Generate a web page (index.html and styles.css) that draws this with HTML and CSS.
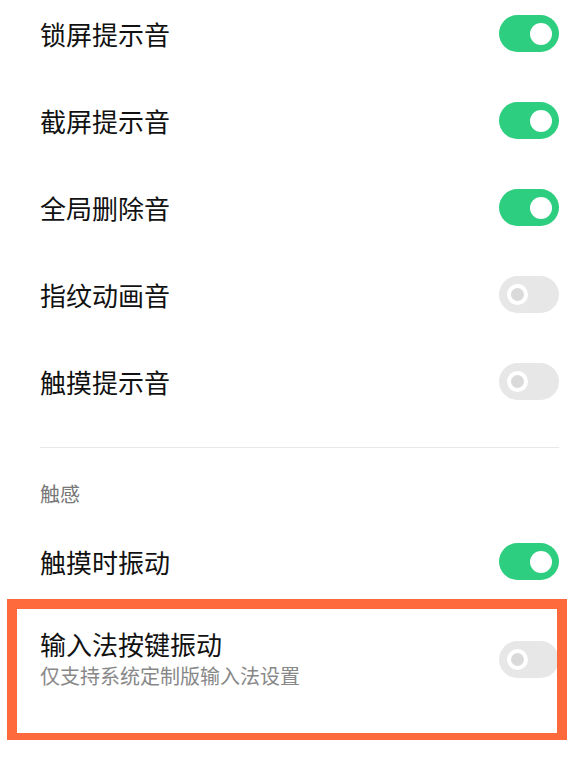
FILE: index.html
```html
<!DOCTYPE html>
<html lang="zh-CN">

<head>
    <meta charset="UTF-8">
    <meta name="viewport" content="width=device-width, initial-scale=1.0">
    <title>声音与振动</title>
    <link rel="stylesheet" href="styles.css">
</head>

<body>
    <div class="list">
        <div class="row">
            <span class="title">锁屏提示音</span>
            <span class="switch on"></span>
        </div>
        <div class="row">
            <span class="title">截屏提示音</span>
            <span class="switch on"></span>
        </div>
        <div class="row">
            <span class="title">全局删除音</span>
            <span class="switch on"></span>
        </div>
        <div class="row">
            <span class="title">指纹动画音</span>
            <span class="switch"></span>
        </div>
        <div class="row">
            <span class="title">触摸提示音</span>
            <span class="switch"></span>
        </div>
    </div>

    <div class="divider"></div>

    <div class="section-title">触感</div>

    <div class="row">
        <span class="title">触摸时振动</span>
        <span class="switch on"></span>
    </div>

    <div class="row row-sub highlight">
        <div>
            <div class="title">输入法按键振动</div>
            <div class="subtitle">仅支持系统定制版输入法设置</div>
        </div>
        <span class="switch"></span>
        <!-- annotation frame drawn over the row -->
        <div class="frame"></div>
    </div>
</body>

</html>
```

FILE: styles.css
```css
body {
    margin: 0;
    background-color: #ffffff;
    font-family: "Noto Sans CJK SC", "Noto Sans", sans-serif;
    color: #111111;
}

.list {
    margin-top: -10px;
}

.row {
    display: flex;
    justify-content: space-between;
    align-items: center;
    height: 87px;
    padding: 0 26px 0 40px;
}

.title {
    font-size: 26px;
    line-height: 32px;
}

.subtitle {
    margin-top: 2px;
    font-size: 20px;
    line-height: 28px;
    color: #888888;
}

.divider {
    height: 1px;
    margin: 22px 26px 0 40px;
    background-color: #e8e8e8;
}

.section-title {
    height: 28px;
    padding: 32px 40px 10px;
    font-size: 20px;
    line-height: 28px;
    color: #777777;
}

.switch {
    position: relative;
    flex-shrink: 0;
    width: 60px;
    height: 37px;
    border-radius: 19px;
    background-color: #e7e7e7;
}

/* off: white ring with a grey dot */
.switch::after {
    content: "";
    position: absolute;
    top: 8px;
    left: 8px;
    width: 13px;
    height: 13px;
    border: 4px solid #ffffff;
    border-radius: 50%;
    background-color: #dadada;
}

.switch.on {
    background-color: #2dce7f;
}

.switch.on::after {
    top: 7.5px;
    left: auto;
    right: 7px;
    width: 22px;
    height: 22px;
    border: none;
    background-color: #ffffff;
}

.row-sub {
    height: auto;
    padding-top: 23px;
    padding-bottom: 50px;
}

.highlight {
    position: relative;
}

.frame {
    position: absolute;
    top: -6px;
    left: 7px;
    right: 18px;
    bottom: -3px;
    border: 10px solid #ff6a3d;
}
```
